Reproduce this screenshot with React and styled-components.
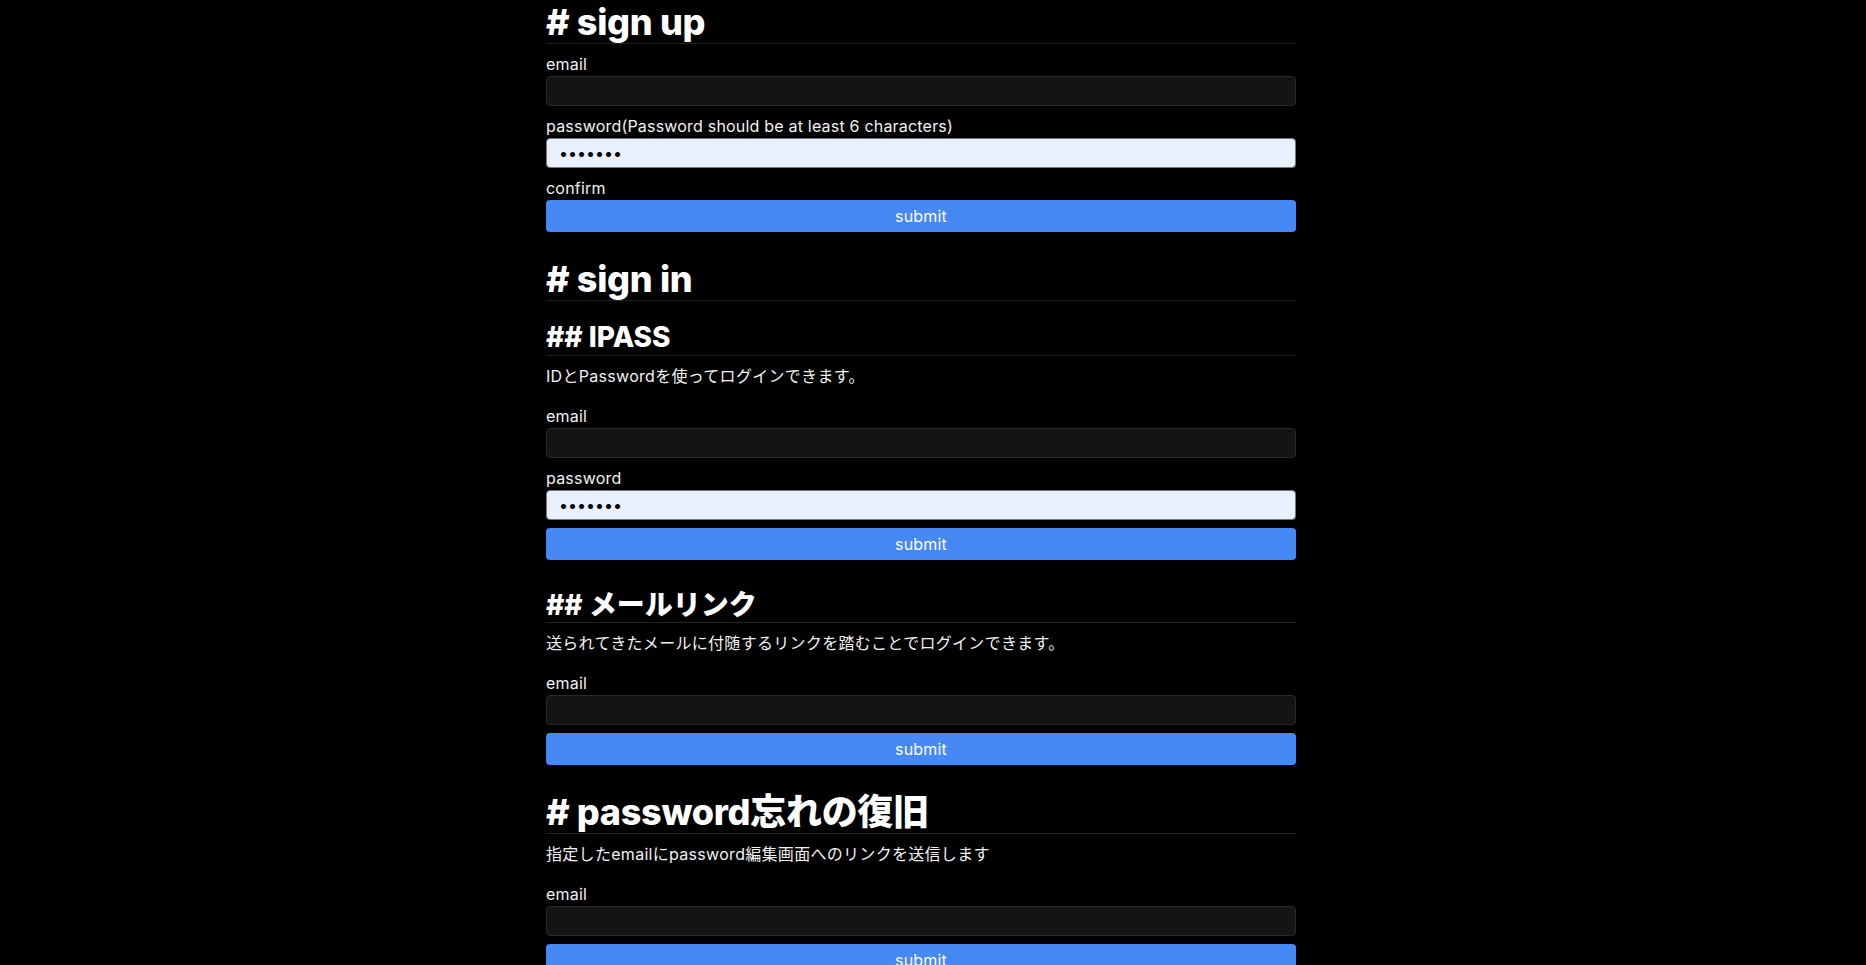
import React from 'react';
import styled, { createGlobalStyle } from 'styled-components';

const GlobalStyle = createGlobalStyle`
    html, body {
        margin: 0;
        padding: 0;
        background: #000;
    }
    body {
        font-family: Inter, "Noto Sans CJK JP", sans-serif;
        color: #f2f2f2;
        font-size: 16px;
        line-height: 1.5;
    }
`;

const Outer = styled.div`
    padding-right: 24px;
`;

const Page = styled.main`
    width: 750px;
    margin: 0 auto;
    display: flex;
    flex-direction: column;
`;

const H1 = styled.h1`
    margin: ${props => props.$top || 0}px 0 0;
    padding-top: 1px;
    font-size: 36px;
    line-height: 42px;
    font-weight: 800;
    letter-spacing: -0.3px;
    color: #fff;
    border-bottom: 1px solid #222;
`;

const H2 = styled.h2`
    margin: ${props => props.$top || 0}px 0 0;
    font-size: 28px;
    line-height: 1.2;
    font-weight: 800;
    color: #fff;
    border-bottom: 1px solid #222;
`;

const Desc = styled.p`
    margin: 8px 0 8px;
    line-height: 24px;
    letter-spacing: 0.3px;
`;

const Form = styled.form`
    display: flex;
    flex-direction: column;
`;

const Label = styled.label`
    display: block;
    margin-top: 8px;
    line-height: 24px;
    letter-spacing: 0.2px;
`;

const Input = styled.input`
    box-sizing: border-box;
    width: 100%;
    height: 30px;
    padding: 0 12px;
    border-radius: 4px;
    border: 1px solid ${props => props.$filled ? '#767676' : '#2a2a2a'};
    background: ${props => props.$filled ? '#e8f0fe' : '#141414'};
    color: ${props => props.$filled ? '#000' : '#fff'};
    font-family: inherit;
    font-size: 16px;
    outline: none;
`;

const Submit = styled.button`
    box-sizing: border-box;
    width: 100%;
    height: 32px;
    margin-top: ${props => props.$top ?? 8}px;
    border: none;
    border-radius: 4px;
    background: #4688f4;
    color: #fff;
    font-family: inherit;
    font-size: 16px;
    letter-spacing: 0.2px;
    cursor: pointer;
`;

const Field = ({ label, type = 'text', filled, hidden }) => (
    <>
        <Label>{label}</Label>
        {!hidden && (
            <Input
                type={type}
                $filled={filled}
                defaultValue={filled ? 'secret1' : ''}
            />
        )}
    </>
);

const App = () => {
    const stop = e => e.preventDefault();
    return (
        <Outer>
            <GlobalStyle />
            <Page>
                <H1># sign up</H1>
                <Form onSubmit={stop}>
                    <Field label='email' />
                    <Field label='password(Password should be at least 6 characters)' type='password' filled />
                    <Field label='confirm' hidden />
                    <Submit type='submit' $top={0}>submit</Submit>
                </Form>

                <H1 $top={25}># sign in</H1>
                <H2 $top={20}>## IPASS</H2>
                <Desc>IDとPasswordを使ってログインできます。</Desc>
                <Form onSubmit={stop}>
                    <Field label='email' />
                    <Field label='password' type='password' filled />
                    <Submit type='submit'>submit</Submit>
                </Form>

                <H2 $top={29}>## メールリンク</H2>
                <Desc>送られてきたメールに付随するリンクを踏むことでログインできます。</Desc>
                <Form onSubmit={stop}>
                    <Field label='email' />
                    <Submit type='submit'>submit</Submit>
                </Form>

                <H1 $top={25}># password忘れの復旧</H1>
                <Desc>指定したemailにpassword編集画面へのリンクを送信します</Desc>
                <Form onSubmit={stop}>
                    <Field label='email' />
                    <Submit type='submit'>submit</Submit>
                </Form>
            </Page>
        </Outer>
    );
};

export default App;
